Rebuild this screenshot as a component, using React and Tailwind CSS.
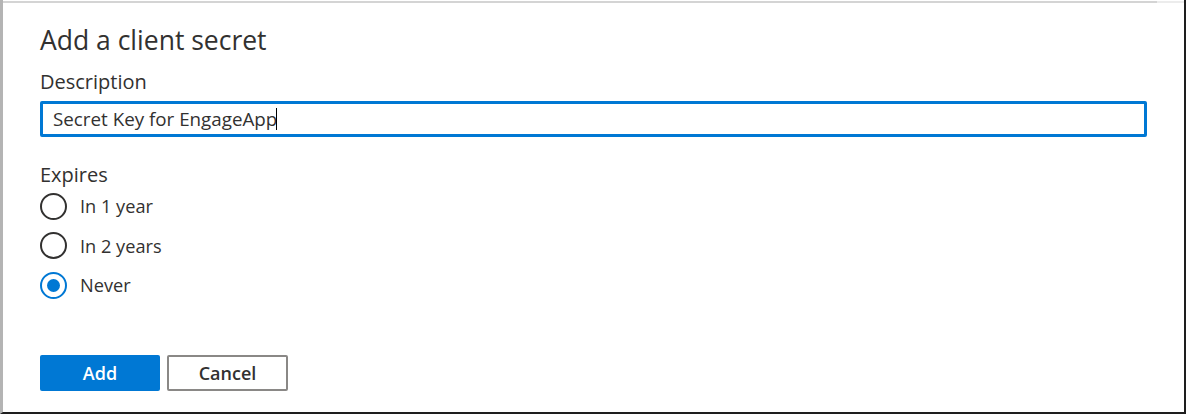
export default function App() {
  const options = [
    { label: "In 1 year", checked: false },
    { label: "In 2 years", checked: false },
    { label: "Never", checked: true },
  ];
  return (
    <div
      className="w-[1186px] h-[414px] bg-white overflow-hidden"
      style={{ fontFamily: '"Open Sans", "Noto Sans", sans-serif' }}
    >
      <div className="h-full flex flex-col border-l-[3px] border-l-[#b4b4b4] border-r-2 border-r-[#1e1e1e] border-b-2 border-b-[#1e1e1e] pt-[1px]">
        <div className="h-[2px] flex">
          <div className="flex-1 bg-[#d4d4d4]" />
          <div className="w-[27px] bg-[#ececec]" />
        </div>
        <div className="flex flex-col pl-[37px] pr-[37px] text-[#323130]">
          <h1 className="mt-[21px] text-[26.5px] leading-[32px] font-normal">Add a client secret</h1>
          <label className="mt-[13px] text-[20px] leading-[26px]">Description</label>
          <div className="mt-[6px] h-[36px] border-[3px] border-[#0078d4] rounded-[2px] flex items-center pl-[10px]">
            <span className="text-[18.8px] leading-[24px] text-[#323130]">Secret Key for EngageApp</span>
            <span className="w-[1px] h-[22px] bg-[#000] -ml-[1px]" />
          </div>
          <div className="mt-[25px] text-[20px] leading-[26px]">Expires</div>
          <div className="mt-[4px] flex flex-col gap-[11.5px]">
            {options.map((o) => (
              <div key={o.label} className="flex items-center h-[28px]">
                {o.checked ? (
                  <span className="w-[27px] h-[27px] rounded-full border-2 border-[#0078d4] flex items-center justify-center">
                    <span className="w-[13px] h-[13px] rounded-full bg-[#0078d4]" />
                  </span>
                ) : (
                  <span className="w-[27px] h-[27px] rounded-full border-2 border-[#323130]" />
                )}
                <span className="ml-[13px] text-[18.2px] leading-[24px] text-[#323130]">{o.label}</span>
              </div>
            ))}
          </div>
          <div className="mt-[56px] flex gap-[7px]">
            <button className="w-[120px] h-[36px] rounded-[2px] bg-[#0078d4] text-white text-[18px] font-semibold">Add</button>
            <button className="w-[121px] h-[36px] rounded-[2px] border-2 border-[#8a8886] bg-white text-[#323130] text-[18px] font-semibold">Cancel</button>
          </div>
        </div>
      </div>
    </div>
  );
}
